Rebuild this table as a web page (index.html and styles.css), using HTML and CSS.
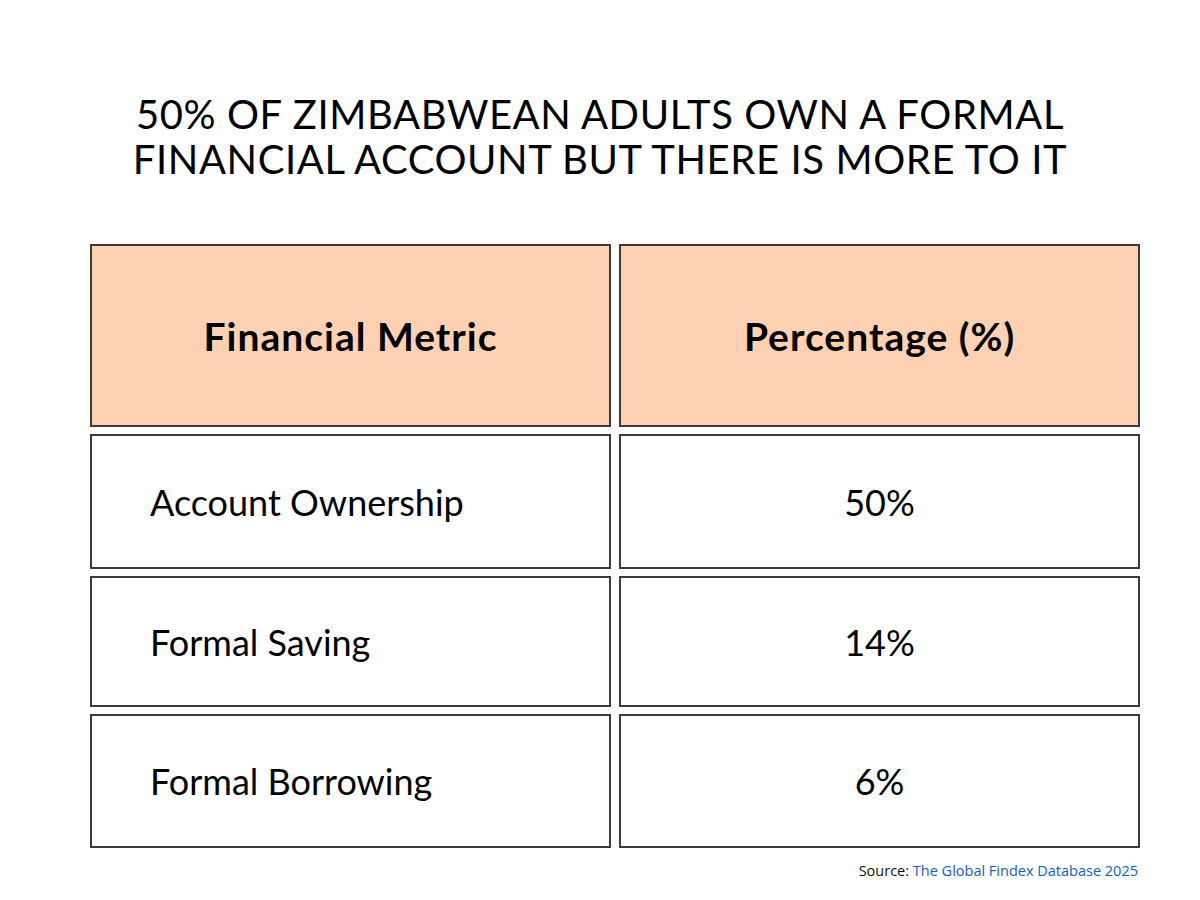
FILE: index.html
```html
<!DOCTYPE html>
<html lang="en">
<head>
    <meta charset="UTF-8">
    <meta name="viewport" content="width=device-width, initial-scale=1.0">
    <title>Financial Accounts in Zimbabwe</title>
    <link rel="stylesheet" href="styles.css">
</head>
<body>

<div class="slide">
    <h1 class="title">50% of Zimbabwean adults own a formal<br>financial account but there is more to it</h1>

    <div class="table">
        <div class="cell head">Financial Metric</div>
        <div class="cell head">Percentage (%)</div>

        <div class="cell metric">Account Ownership</div>
        <div class="cell value">50%</div>

        <div class="cell metric">Formal Saving</div>
        <div class="cell value">14%</div>

        <div class="cell metric">Formal Borrowing</div>
        <div class="cell value">6%</div>
    </div>

    <p class="source">Source: <span class="source-link">The Global Findex Database 2025</span></p>
</div>

</body>
</html>
```
FILE: styles.css
```css
body {
    margin: 0;
    background-color: #ffffff;
    font-family: "Lato", "Noto Sans", sans-serif;
    color: #000;
}
.slide {
    width: 1200px;
    height: 900px;
    padding: 0 60px 0 90px;
    box-sizing: border-box;
    overflow: hidden;
}
.title {
    margin: 0 -60px 0 -90px;
    padding-top: 92px;
    text-align: center;
    text-transform: uppercase;
    font-weight: 400;
    font-size: 40px;
    line-height: 45px;
    letter-spacing: 0.6px;
}
.table {
    margin-top: 62px;
    width: 1050px;
    display: grid;
    grid-template-columns: 521px 521px;
    grid-template-rows: 183px 135px 131px 134px;
    column-gap: 8px;
    row-gap: 7px;
}
.cell {
    border: 2px solid #3c3c3c;
    box-sizing: border-box;
    display: flex;
    align-items: center;
    font-size: 36px;
}
.head {
    background-color: #fed1b2;
    justify-content: center;
    font-weight: 700;
    font-size: 39px;
    letter-spacing: 1px;
}
.metric {
    padding-left: 58px;
}
.value {
    justify-content: center;
}
.source {
    margin: 13px 0 0;
    width: 1048px;
    text-align: right;
    font-family: "Open Sans", sans-serif;
    font-size: 14.5px;
    color: #111;
}
.source-link {
    color: #1a5cc0;
}
```
